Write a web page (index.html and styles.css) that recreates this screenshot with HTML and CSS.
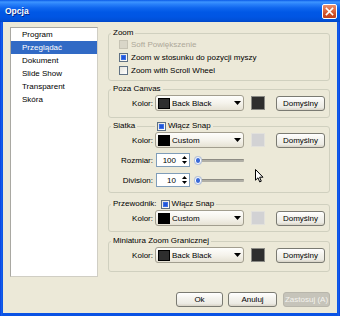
FILE: index.html
```html
<!DOCTYPE html>
<html>
<head>
<meta charset="utf-8">
<title>Opcja</title>
<link rel="stylesheet" href="styles.css">
</head>
<body>
<div class="window">
  <div class="titlebar">
    <span class="title">Opcja</span>
    <span class="close"><svg width="9" height="9" viewBox="0 0 9 9"><path d="M1.5 1.5L7.5 7.5M7.5 1.5L1.5 7.5" stroke="#fff" stroke-width="1.7" stroke-linecap="square"/></svg></span>
  </div>
  <div class="client">
    <div class="main">
      <ul class="list">
        <li>Program</li>
        <li class="sel">Przeglądać</li>
        <li>Dokument</li>
        <li>Slide Show</li>
        <li>Transparent</li>
        <li>Skóra</li>
      </ul>
      <div class="groups">
        <div class="group g-zoom">
          <div class="ghead"><span class="glabel">Zoom</span></div>
          <div class="checks">
            <div class="check disabled"><span class="box"></span><span>Soft Powiększenie</span></div>
            <div class="check"><span class="box on"></span><span>Zoom w stosunku do pozycji myszy</span></div>
            <div class="check"><span class="box"></span><span>Zoom with Scroll Wheel</span></div>
          </div>
        </div>

        <div class="group g-poza">
          <div class="ghead"><span class="glabel">Poza Canvas</span></div>
          <div class="row">
            <span class="lbl">Kolor:</span>
            <div class="combo"><span class="csw dark"></span><span class="ctext">Back Black</span><svg class="carrow" width="7" height="4" viewBox="0 0 7 4"><path d="M0 0H7L3.5 4Z" fill="#000"/></svg></div>
            <span class="sw dark"></span>
            <span class="btn btn-def">Domyślny</span>
          </div>
        </div>

        <div class="group g-siatka">
          <div class="ghead">
            <span class="gcol"><span class="glabel">Siatka</span></span>
            <span class="glabel snap"><span class="box on"></span><span>Włącz Snap</span></span>
          </div>
          <div class="row">
            <span class="lbl">Kolor:</span>
            <div class="combo"><span class="csw black"></span><span class="ctext">Custom</span><svg class="carrow" width="7" height="4" viewBox="0 0 7 4"><path d="M0 0H7L3.5 4Z" fill="#000"/></svg></div>
            <span class="sw off"></span>
            <span class="btn btn-def">Domyślny</span>
          </div>
          <div class="srow first">
            <span class="lbl">Rozmiar:</span>
            <div class="spin"><span class="sval">100</span><span class="sarrows"><svg width="5" height="3" viewBox="0 0 5 3"><path d="M0 3H5L2.5 0Z" fill="#000"/></svg><svg width="5" height="3" viewBox="0 0 5 3"><path d="M0 0H5L2.5 3Z" fill="#000"/></svg></span></div>
            <div class="slider"><span class="thumb"></span><span class="track"></span></div>
          </div>
          <div class="srow second">
            <span class="lbl">Division:</span>
            <div class="spin"><span class="sval">10</span><span class="sarrows"><svg width="5" height="3" viewBox="0 0 5 3"><path d="M0 3H5L2.5 0Z" fill="#000"/></svg><svg width="5" height="3" viewBox="0 0 5 3"><path d="M0 0H5L2.5 3Z" fill="#000"/></svg></span></div>
            <div class="slider"><span class="thumb"></span><span class="track"></span></div>
          </div>
        </div>

        <div class="group g-przew">
          <div class="ghead">
            <span class="glabel">Przewodnik:</span>
            <span class="glabel snap tight"><span class="box on"></span><span>Włącz Snap</span></span>
          </div>
          <div class="row">
            <span class="lbl">Kolor:</span>
            <div class="combo"><span class="csw black"></span><span class="ctext">Custom</span><svg class="carrow" width="7" height="4" viewBox="0 0 7 4"><path d="M0 0H7L3.5 4Z" fill="#000"/></svg></div>
            <span class="sw off"></span>
            <span class="btn btn-def">Domyślny</span>
          </div>
        </div>

        <div class="group g-mini">
          <div class="ghead"><span class="glabel">Miniatura Zoom Granicznej</span></div>
          <div class="row">
            <span class="lbl">Kolor:</span>
            <div class="combo"><span class="csw dark"></span><span class="ctext">Back Black</span><svg class="carrow" width="7" height="4" viewBox="0 0 7 4"><path d="M0 0H7L3.5 4Z" fill="#000"/></svg></div>
            <span class="sw dark"></span>
            <span class="btn btn-def">Domyślny</span>
          </div>
        </div>
      </div>
    </div>
    <div class="buttons">
      <span class="btn b-ok">Ok</span>
      <span class="btn b-cancel">Anuluj</span>
      <span class="btn b-apply disabled">Zastosuj (A)</span>
    </div>
  </div>
  <svg class="cursor" width="9" height="14" viewBox="0 0 9 14"><path d="M0.5 0.5V11.2L3 8.8L4.7 12.9L6.3 12.2L4.6 8.2H8Z" fill="#fff" stroke="#000" stroke-width="1" stroke-linejoin="miter"/></svg>
</div>
</body>
</html>
```
FILE: styles.css
```css
* { box-sizing: border-box; }
html, body { margin: 0; padding: 0; }
body {
  width: 340px;
  height: 316px;
  overflow: hidden;
  background: #ffffff;
  font-family: "Liberation Sans", Arial, sans-serif;
  font-size: 8px;
  color: #000;
}
.window {
  position: relative;
  width: 340px;
  height: 316px;
  display: flex;
  flex-direction: column;
  background: linear-gradient(to right, #0831D9 0, #1461EC 1px, #0A52E4 3px, #0A52E4 337px, #1461EC 339px, #0831D9 340px);
}
.titlebar {
  height: 22px;
  display: flex;
  align-items: center;
  justify-content: space-between;
  padding: 0 3px 0 5px;
  background: linear-gradient(to bottom, #0A5AE6 0, #3D95FF 2px, #2A82FA 4px, #0F66EE 8px, #0058E6 12px, #0055E3 17px, #0050D8 20px, #0046C8 22px);
}
.title {
  color: #fff;
  font-weight: bold;
  font-size: 8.5px;
  text-shadow: 1px 1px 0 #0A2A8A;
}
.close {
  width: 15px;
  height: 15px;
  border: 1px solid #fff;
  border-radius: 2px;
  background: linear-gradient(to bottom, #E8906F 0, #E06B43 40%, #CC4A22 75%, #C0401C 100%);
  display: flex;
  align-items: center;
  justify-content: center;
}
.client {
  flex: 1;
  margin: 0 3px 3px 3px;
  background: #ECE9D8;
  padding: 5px 7px 0 7px;
  display: flex;
  flex-direction: column;
}
.main {
  display: flex;
  height: 250px;
}
.list {
  width: 88px;
  height: 250px;
  margin: 0;
  padding: 0;
  list-style: none;
  background: #fff;
  border: 1px solid #A9A8A2;
  border-right-color: #D0CEC4;
  border-bottom-color: #D0CEC4;
}
.list li {
  height: 13px;
  line-height: 13px;
  padding-left: 11px;
  white-space: nowrap;
}
.list li.sel {
  background: #316AC5;
  color: #fff;
}
.groups {
  width: 222px;
  margin-left: 10px;
  display: flex;
  flex-direction: column;
}
.group {
  border: 1px solid #D0D0BF;
  border-radius: 3px;
}
.ghead {
  display: flex;
  align-items: center;
  height: 10px;
  line-height: 10px;
  margin-top: -6px;
  padding-left: 2px;
  white-space: nowrap;
}
.glabel {
  background: #ECE9D8;
  padding: 0 2px;
  display: flex;
  align-items: center;
}
.gcol {
  width: 44px;
  display: flex;
}
.snap .box { margin-right: 2px; }
.g-zoom { margin-top: 6px; padding-bottom: 3px; }
.g-poza { margin-top: 8px; padding-bottom: 6px; }
.g-siatka { margin-top: 8px; padding-bottom: 5px; }
.g-przew { margin-top: 11px; padding-bottom: 5px; }
.g-mini { margin-top: 9px; padding-bottom: 8px; }

.checks { padding-left: 10px; }
.check {
  height: 13px;
  display: flex;
  align-items: center;
  white-space: nowrap;
}
.check .box { margin-right: 3px; }
.box {
  width: 9px;
  height: 9px;
  border: 1px solid #5F7183;
  background: linear-gradient(135deg, #E4E3DC, #FFFFFF);
  display: inline-flex;
  align-items: center;
  justify-content: center;
  flex: none;
}
.box.on::after {
  content: "";
  width: 5px;
  height: 5px;
  background: #2156D9;
  box-shadow: inset 0 0 0 1px #3B6FE6;
}
.check.disabled { color: #ACA899; }
.check.disabled .box {
  border-color: #C6C3B4;
  background: #D9D6C8;
}

.row {
  display: flex;
  align-items: center;
  height: 16px;
  margin-top: 1px;
}
.lbl {
  width: 44px;
  text-align: right;
  white-space: nowrap;
}
.combo {
  width: 89px;
  height: 16px;
  margin-left: 2px;
  border: 1px solid #A29E8F;
  border-radius: 3px;
  background: linear-gradient(to bottom, #FEFEFC 0, #F5F3EC 50%, #E6E2D4 100%);
  display: flex;
  align-items: center;
  padding-left: 2px;
}
.csw {
  width: 12px;
  height: 11px;
  border: 1px solid #000;
  margin-right: 2px;
  flex: none;
}
.csw.dark { background: #2E2E2E; }
.csw.black { background: #000; }
.ctext { flex: 1; white-space: nowrap; }
.carrow { margin-right: 2px; flex: none; }
.sw {
  width: 14px;
  height: 14px;
  margin-left: 7px;
  flex: none;
}
.sw.dark {
  background: #2E2E2E;
  border: 1px solid #8A8A85;
}
.sw.off {
  background: #D2D2D4;
  border: 1px solid #E2E1DC;
}
.btn {
  height: 15px;
  border: 1px solid #7A7A72;
  border-radius: 3px;
  background: linear-gradient(to bottom, #FFFFFF 0, #F4F3EE 40%, #ECEBE4 80%, #D8D3C6 100%);
  display: flex;
  align-items: center;
  justify-content: center;
  white-space: nowrap;
  flex: none;
}
.btn-def {
  width: 49px;
  margin-left: 11px;
}
.srow {
  display: flex;
  align-items: center;
  height: 14px;
}
.srow.first { margin-top: 5px; }
.srow.second { margin-top: 6px; }
.spin {
  width: 34px;
  height: 14px;
  margin-left: 3px;
  border: 1px solid #7F9DB9;
  background: #fff;
  display: flex;
  align-items: center;
  justify-content: flex-end;
}
.sval {
  padding-right: 3px;
}
.sarrows {
  width: 10px;
  height: 12px;
  display: flex;
  flex-direction: column;
  align-items: center;
  justify-content: space-around;
  padding: 1px 0;
}
.slider {
  width: 51px;
  margin-left: 3px;
  height: 8px;
  display: flex;
  align-items: center;
}
.thumb {
  width: 6px;
  height: 7px;
  border-radius: 3px;
  background: #3A6AD8;
  border: 1px solid #fff;
  box-shadow: 0 0 0 1px #B8C4D8;
  flex: none;
  margin-left: 2px;
  position: relative;
  z-index: 1;
}
.track {
  flex: 1;
  height: 3px;
  margin-left: -1px;
  background: #B1AFA6;
  border-top: 1px solid #8E8C84;
  border-radius: 1px;
}
.buttons {
  display: flex;
  justify-content: flex-end;
  margin-top: 15px;
}
.b-ok { width: 47px; }
.b-cancel { width: 49px; margin-left: 5px; }
.b-apply { width: 47px; margin-left: 6px; }
.btn.disabled {
  background: #C6C4BA;
  border-color: #B8B6AB;
  color: #F4F3EE;
}
.cursor {
  position: absolute;
  left: 255px;
  top: 169px;
}
```
